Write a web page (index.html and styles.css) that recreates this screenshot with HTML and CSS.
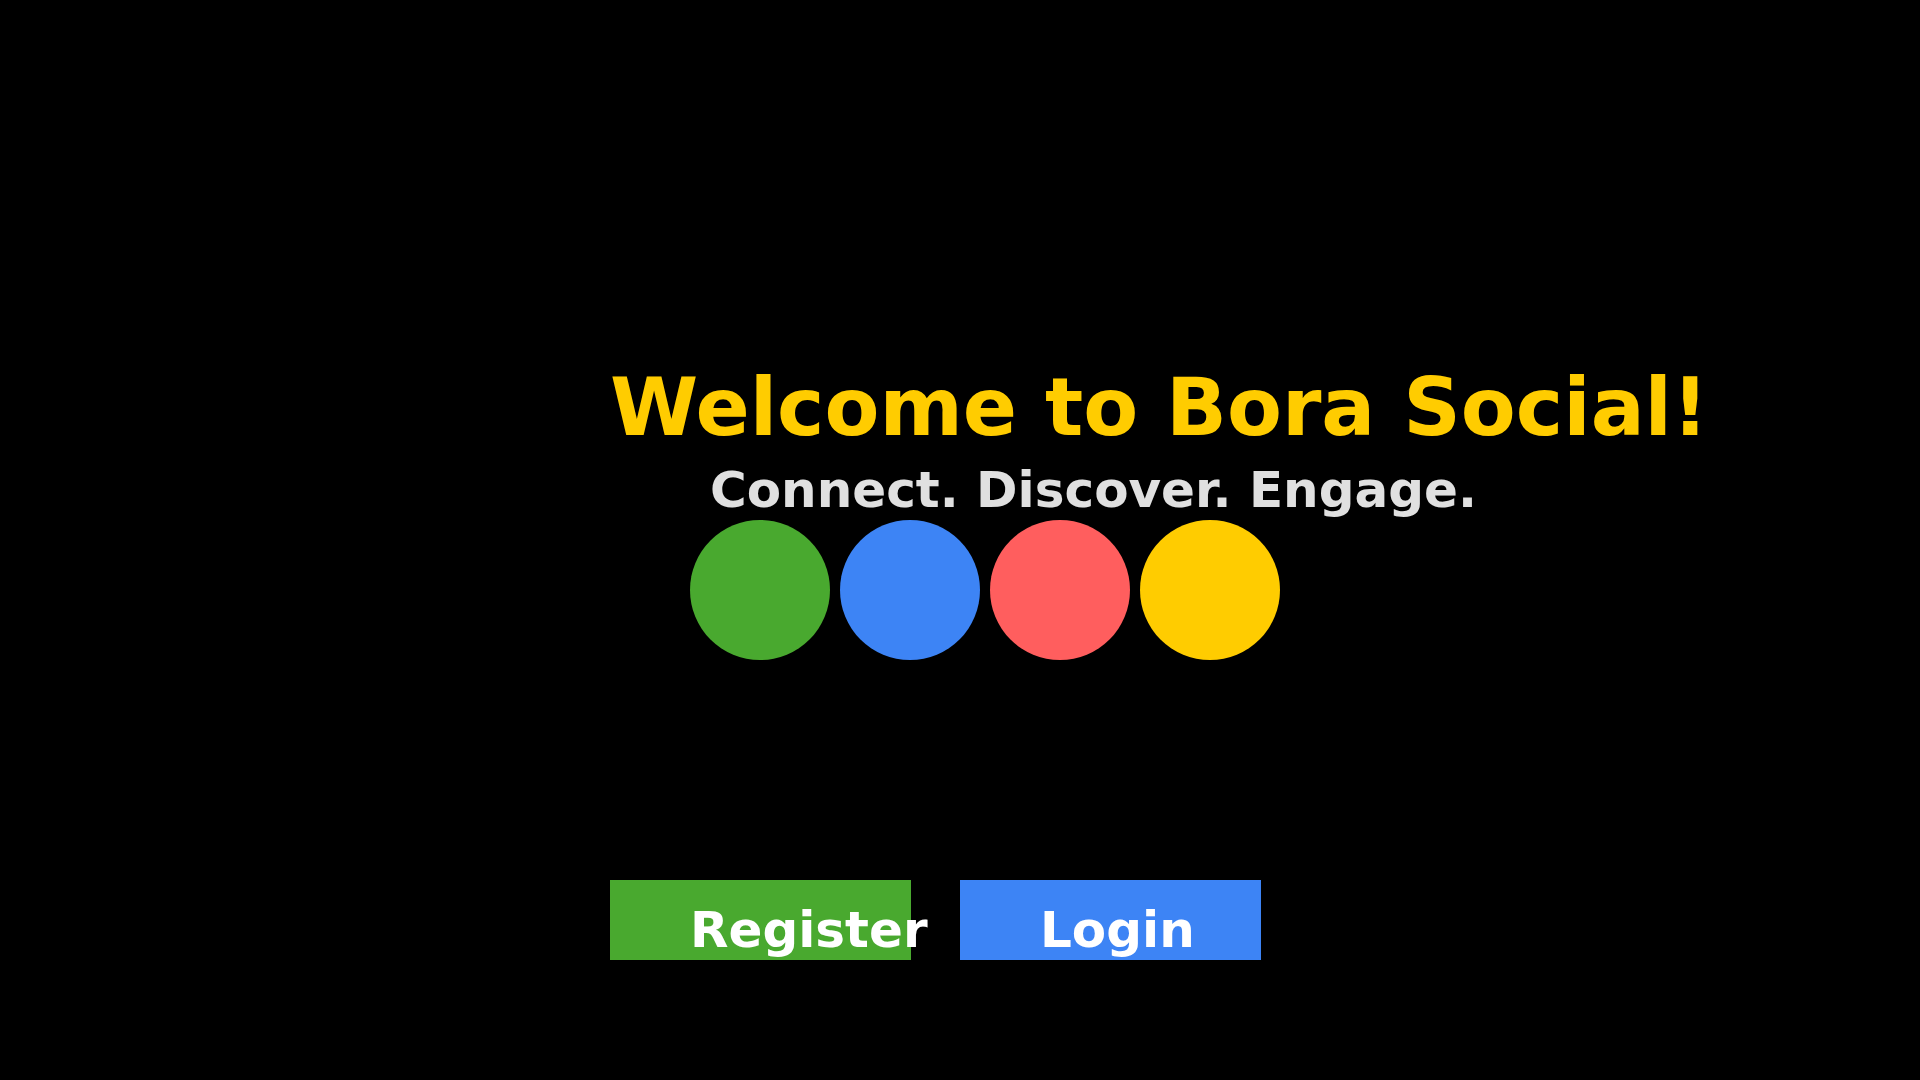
FILE: index.html
```html
<!DOCTYPE html>
<html lang="en">
<head>
<meta charset="utf-8">
<title>Bora Social</title>
<link rel="stylesheet" href="styles.css">
</head>
<body>
<main class="hero">
  <h1 class="title">Welcome to Bora Social!</h1>
  <p class="tagline">Connect. Discover. Engage.</p>
  <div class="dots">
    <span class="dot dot-green"></span>
    <span class="dot dot-blue"></span>
    <span class="dot dot-red"></span>
    <span class="dot dot-yellow"></span>
  </div>
  <div class="actions">
    <a class="btn btn-register" href="#">Register</a>
    <a class="btn btn-login" href="#">Login</a>
  </div>
</main>
</body>
</html>
```

FILE: styles.css
```css
html, body {
  margin: 0;
  padding: 0;
  background: #000;
}

body {
  width: 1920px;
  height: 1080px;
  overflow: hidden;
  font-family: "DejaVu Sans", "Liberation Sans", sans-serif;
  font-weight: bold;
}

.hero {
  display: flex;
  flex-direction: column;
  align-items: flex-start;
  padding: 361px 0 0 610px;
}

.title {
  margin: 0;
  font-size: 80px;
  line-height: 93px;
  color: #ffcc00;
  white-space: nowrap;
}

.tagline {
  margin: 7px 0 0 100px;
  font-size: 50px;
  line-height: 58px;
  color: #e0e0e0;
  white-space: nowrap;
}

.dots {
  display: flex;
  gap: 10px;
  margin: 1px 0 0 80px;
}

.dot {
  width: 140px;
  height: 140px;
  border-radius: 50%;
}

.dot-green { background: #49a92f; }
.dot-blue { background: #3d84f5; }
.dot-red { background: #ff5e5e; }
.dot-yellow { background: #ffcc00; }

.actions {
  display: flex;
  gap: 49px;
  margin-top: 220px;
}

.btn {
  box-sizing: border-box;
  display: block;
  width: 301px;
  height: 80px;
  padding: 21px 0 0 80px;
  font-size: 50px;
  line-height: 58px;
  color: #fff;
  text-decoration: none;
  white-space: nowrap;
}

.btn-register { background: #49a92f; }
.btn-login { background: #3d84f5; }
```
